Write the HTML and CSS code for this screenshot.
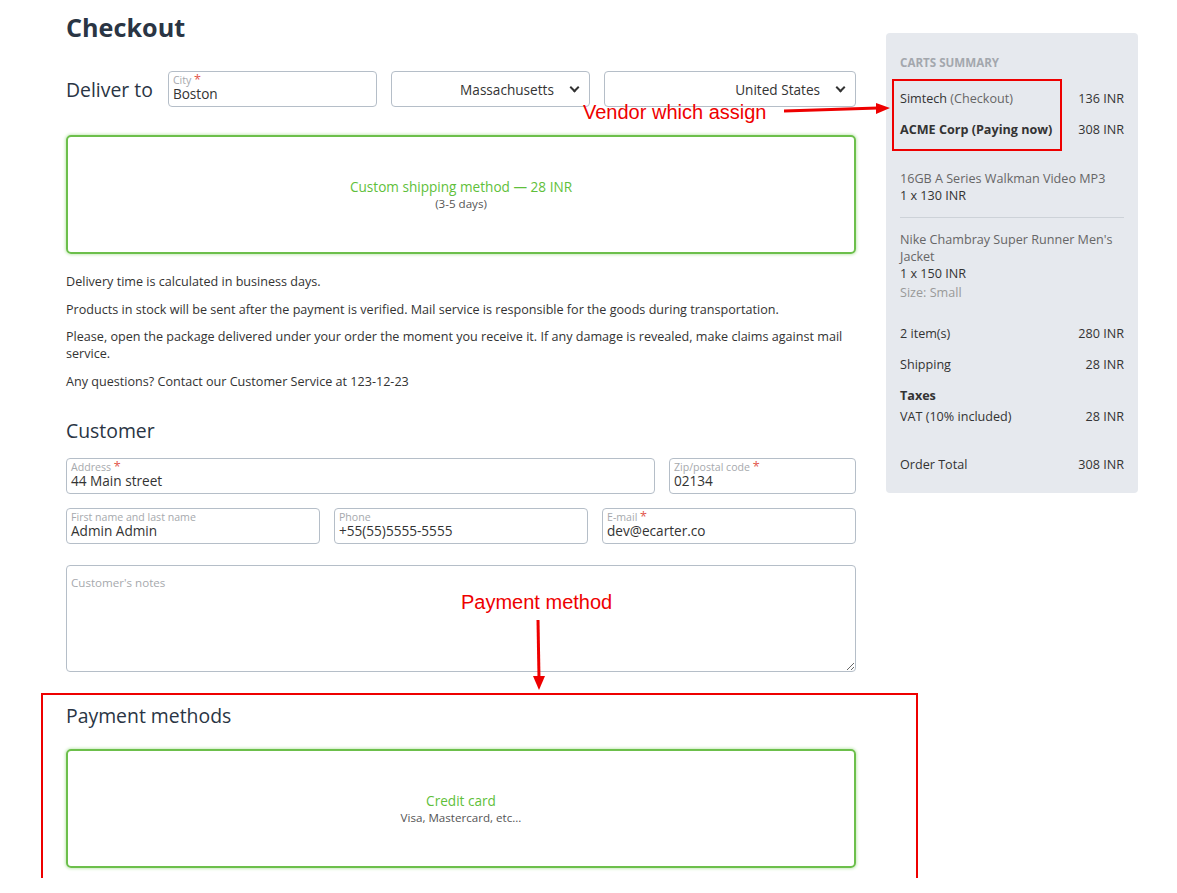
FILE: index.html
```html
<!DOCTYPE html>
<html lang="en">
<head>
  <meta charset="UTF-8">
  <meta name="viewport" content="width=device-width,initial-scale=1.0">
  <title>Checkout</title>
  <link rel="stylesheet" href="styles.css">
</head>
<body>
  <div class="page">
    <main class="checkout">
      <h1>Checkout</h1>

      <!-- deliver to -->
      <div class="deliver">
        <h2>Deliver to</h2>
        <div class="field city">
          <label>City <span class="req">*</span></label>
          <div class="value">Boston</div>
        </div>
        <div class="select state">Massachusetts <span class="chev"></span></div>
        <div class="select country">United States <span class="chev"></span></div>
      </div>

      <div class="method">
        <div class="method-title">Custom shipping method — 28 INR</div>
        <div class="method-sub">(3-5 days)</div>
      </div>

      <div class="notes">
        <p>Delivery time is calculated in business days.</p>
        <p>Products in stock will be sent after the payment is verified. Mail service is responsible for the goods during transportation.</p>
        <p>Please, open the package delivered under your order the moment you receive it. If any damage is revealed, make claims against mail service.</p>
        <p>Any questions? Contact our Customer Service at 123-12-23</p>
      </div>

      <!-- customer -->
      <h2 class="section">Customer</h2>
      <div class="row row-address">
        <div class="field">
          <label>Address <span class="req">*</span></label>
          <div class="value">44 Main street</div>
        </div>
        <div class="field">
          <label>Zip/postal code <span class="req">*</span></label>
          <div class="value">02134</div>
        </div>
      </div>
      <div class="row row-contact">
        <div class="field">
          <label>First name and last name</label>
          <div class="value">Admin Admin</div>
        </div>
        <div class="field">
          <label>Phone</label>
          <div class="value">+55(55)5555-5555</div>
        </div>
        <div class="field">
          <label>E-mail <span class="req">*</span></label>
          <div class="value">dev@ecarter.co</div>
        </div>
      </div>
      <textarea class="textarea" placeholder="Customer's notes"></textarea>

      <!-- payment -->
      <div class="payment">
        <h2 class="section">Payment methods</h2>
        <div class="method pay">
          <div class="method-title">Credit card</div>
          <div class="method-sub">Visa, Mastercard, etc...</div>
        </div>
      </div>

      <div class="note-box pay-box"></div>
      <div class="annot annot-pay">Payment method</div>
      <svg class="arrow arrow-pay" width="20" height="72" viewBox="0 0 20 72">
        <line x1="9" y1="0" x2="10" y2="58" stroke="#e00" stroke-width="3"/>
        <polygon points="4,56 16,56 10,70" fill="#e00"/>
      </svg>
      <div class="annot annot-vendor">Vendor which assign</div>
      <svg class="arrow arrow-vendor" width="110" height="14" viewBox="0 0 110 14">
        <line x1="0" y1="9" x2="94" y2="6" stroke="#e00" stroke-width="3"/>
        <polygon points="92,1 92,12 106,6" fill="#e00"/>
      </svg>
    </main>

    <!-- summary -->
    <aside class="summary">
      <div class="sum-title">Carts summary</div>
      <div class="vendors">
        <div class="sum-row"><span>Simtech <span class="muted">(Checkout)</span></span><span>136 INR</span></div>
        <div class="sum-row active"><span>ACME Corp (Paying now)</span><span>308 INR</span></div>
        <div class="note-box vendor-box"></div>
      </div>
      <div class="item">
        <div>16GB A Series Walkman Video MP3</div>
        <div class="qty">1 x 130 INR</div>
      </div>
      <div class="item last">
        <div>Nike Chambray Super Runner Men's Jacket</div>
        <div class="qty">1 x 150 INR</div>
        <div class="opt">Size: Small</div>
      </div>
      <div class="sum-row"><span>2 item(s)</span><span>280 INR</span></div>
      <div class="sum-row"><span>Shipping</span><span>28 INR</span></div>
      <div class="taxes">
        <div class="tax-title">Taxes</div>
        <div class="sum-row"><span>VAT (10% included)</span><span>28 INR</span></div>
      </div>
      <div class="sum-row total"><span>Order Total</span><span>308 INR</span></div>
    </aside>
  </div>
</body>
</html>
```

FILE: styles.css
```css
/* ——— base ——— */
body {
  margin:0; font-family:"Open Sans",sans-serif;
  color:#333; background:#fff;
}
.page {
  display:flex; align-items:flex-start; gap:30px;
  padding:0 0 0 66px;
}
.checkout { width:790px; position:relative; }
h1 {
  margin:9px 0 0; font-size:25.2px; line-height:36px;
  font-weight:700; color:#2a3544;
}
h2 {
  margin:0; font-size:19.4px; font-weight:400; color:#2a3544;
}

/* ——— fields ——— */
.deliver {
  display:flex; align-items:center; gap:14px;
  margin-top:26px; height:36px;
}
.deliver h2 { margin-right:1px; }
.field {
  box-sizing:border-box; height:36px;
  border:1px solid #b5bec8; border-radius:4px;
  padding:2px 4px 0; background:#fff;
}
.field label {
  display:block; font-size:10.6px; line-height:12px; color:#a6a9ad;
}
.field .value { font-size:13.6px; line-height:15px; color:#333; }
.req { color:#e2564c; font-size:12.6px; line-height:0; }
.city { width:209px; }
.select {
  box-sizing:border-box; height:36px;
  border:1px solid #b5bec8; border-radius:4px;
  display:flex; align-items:center; justify-content:flex-end;
  padding-right:8px; font-size:13.6px; color:#333;
}
.state { width:199px; }
.country { flex:1; }
.chev {
  width:5px; height:5px; margin:0 3px 3px 17px;
  border-right:2px solid #333; border-bottom:2px solid #333;
  transform:rotate(45deg);
}

/* ——— shipping / payment method card ——— */
.method {
  box-sizing:border-box; height:119px; margin-top:28px;
  border:2px solid #6cbf4b; border-radius:5px;
  box-shadow:0 0 3px 1px #c9ebbd;
  display:flex; flex-direction:column; align-items:center; justify-content:center;
  text-align:center;
}
.method-title { font-size:13.6px; line-height:18px; color:#5fbf3b; }
.method-sub { font-size:11.6px; line-height:15px; color:#555; }

.notes { margin-top:19px; font-size:12.6px; line-height:17px; }
.notes p { margin:0 0 10.6px; }

.section { margin-top:28px; line-height:26px; }
.row { display:flex; gap:14px; margin-top:14px; }
.row-address .field:first-child { flex:1; }
.row-address .field:last-child { width:187px; }
.row-contact .field { flex:1; }
.textarea {
  display:block; width:100%; box-sizing:border-box; height:107px; margin:21px 0 0;
  border:1px solid #b5bec8; border-radius:4px; resize:vertical;
  padding:9px 4px; font-family:"Open Sans",sans-serif; font-size:11.6px; color:#333;
}
.textarea::placeholder { color:#a6a9ad; opacity:1; }

.payment { padding-top:21px; padding-bottom:10px; }
.payment .section { margin-top:10px; }
.pay { margin-top:20px; }

/* ——— summary ——— */
.summary {
  width:252px; box-sizing:border-box; margin-top:33px;
  background:#e6e9ee; border-radius:4px;
  padding:21px 14px 20px; font-size:12.6px; line-height:17px;
}
.sum-title {
  font-size:11.6px; font-weight:700; color:#a3a7ad;
  text-transform:uppercase; line-height:17px; margin-bottom:19px;
}
.sum-row { display:flex; justify-content:space-between; margin-bottom:14px; }
.muted { color:#666; }
.active { font-weight:700; }
.active span:last-child { font-weight:400; }
.vendors { position:relative; }
.item { margin-top:32px; padding-bottom:13px; border-bottom:1px solid #cdd2d8; }
.item.last { border:none; padding-bottom:0; margin-top:13px; margin-bottom:24px; }
.item > div:first-child { color:#666; }
.opt { color:#999; margin-top:2px; }
.taxes { margin-top:1px; margin-bottom:31px; }
.tax-title { font-weight:700; margin-bottom:4px; }
.taxes .sum-row { margin:0; }
.total { margin:0; }

/* ——— annotations ——— */
.note-box { position:absolute; border:2px solid #e00; box-sizing:border-box; }
.pay-box { left:-25px; top:693px; width:877px; height:193px; }
.vendor-box { left:-8px; top:-11px; width:170px; height:72px; }
.annot {
  position:absolute; font-family:"Liberation Sans",Arial,sans-serif;
  font-size:20px; color:#e00; white-space:nowrap;
}
.annot-pay { left:395px; top:591px; }
.annot-vendor { left:517px; top:101px; }
.arrow { position:absolute; }
.arrow-pay { left:463px; top:620px; }
.arrow-vendor { left:718px; top:102px; }
```
